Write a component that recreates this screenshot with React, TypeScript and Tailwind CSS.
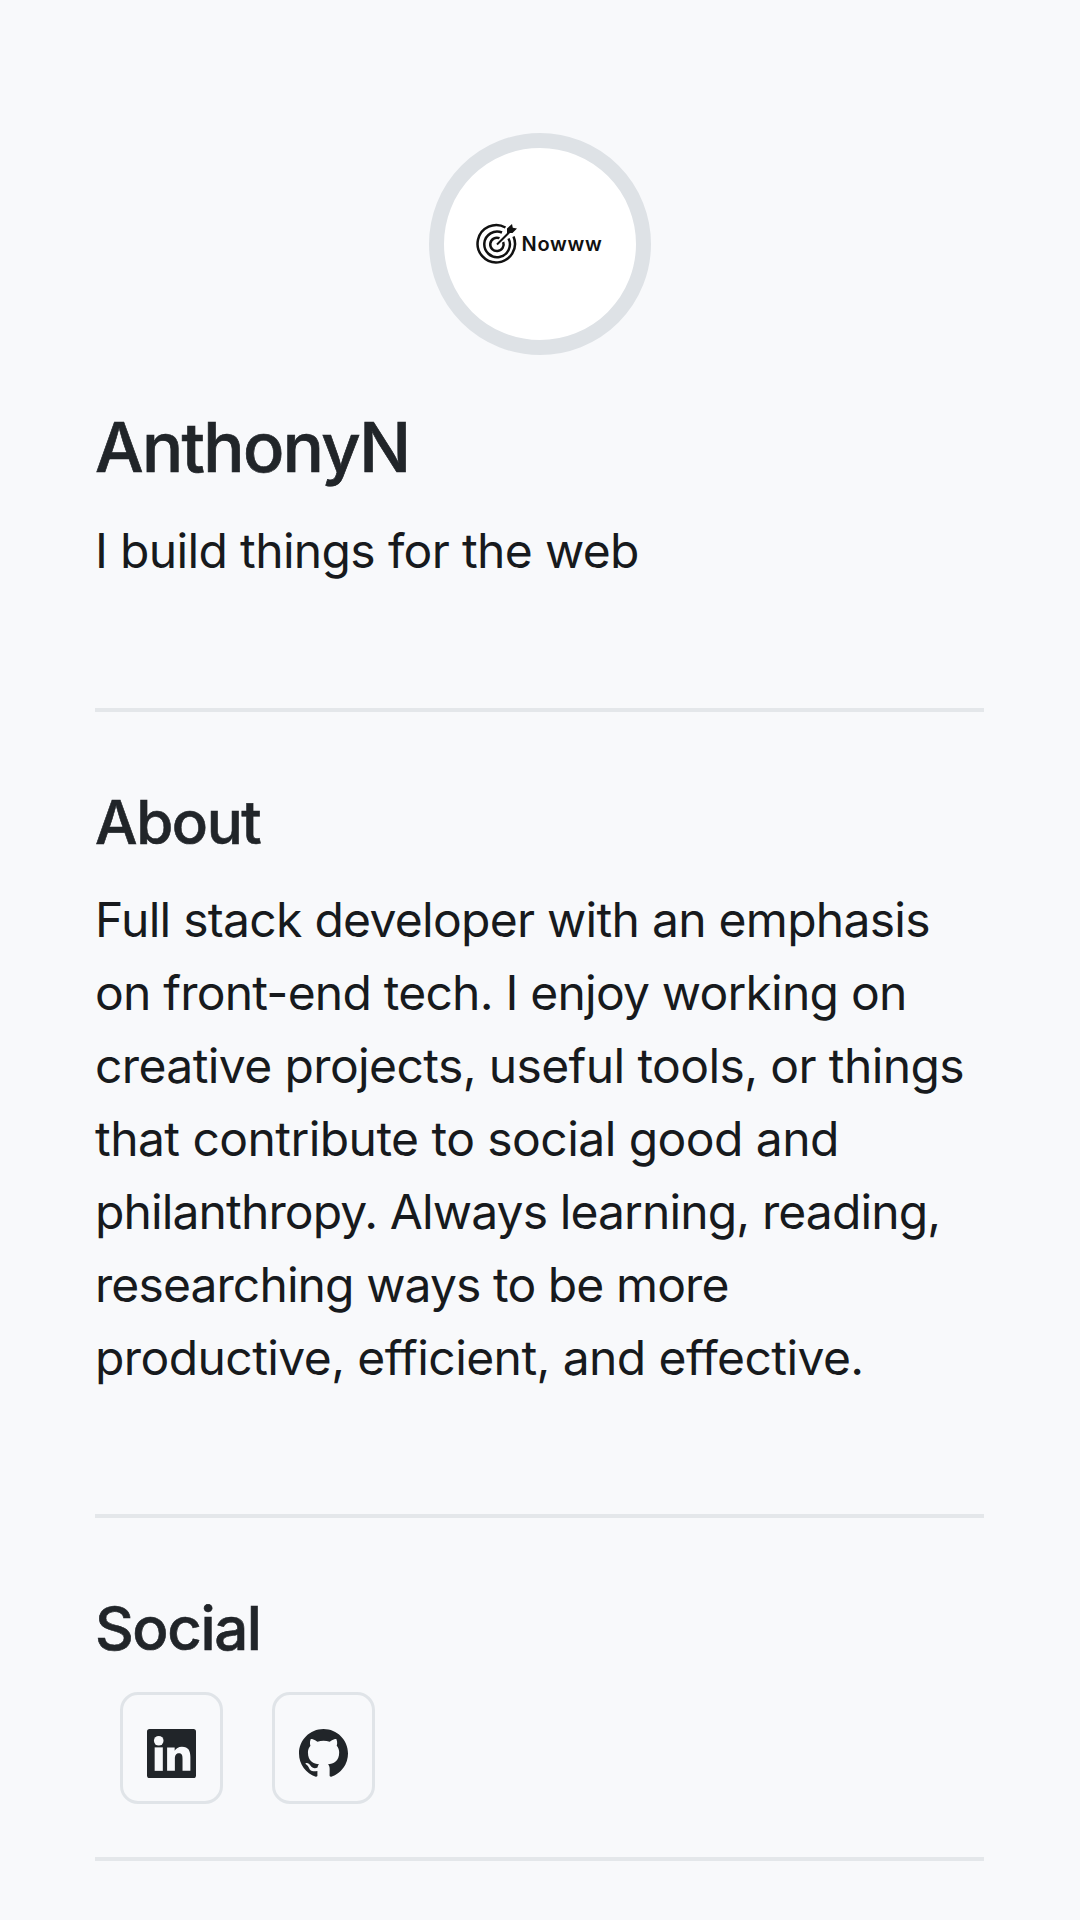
import React from 'react';
import { BsGithub } from 'react-icons/bs';

const aboutLines = [
  { text: 'Full stack developer with an emphasis', tracking: 'tracking-[-0.72px]' },
  { text: 'on front-end tech. I enjoy working on', tracking: 'tracking-[-0.78px]' },
  { text: 'creative projects, useful tools, or things', tracking: 'tracking-[-0.61px]' },
  { text: 'that contribute to social good and', tracking: 'tracking-[-0.56px]' },
  { text: 'philanthropy. Always learning, reading,', tracking: 'tracking-[-0.88px]' },
  { text: 'researching ways to be more', tracking: 'tracking-[-0.9px]' },
  { text: 'productive, efficient, and effective.', tracking: 'tracking-[-0.58px]' },
];

function TargetLogo() {
  return (
    <svg viewBox="0 0 42 42" className="h-[42px] w-[42px] shrink-0" fill="none" stroke="#111" strokeWidth="2.5">
      <path d="M29.500 4.500A18.700 18.700 0 1 0 37.500 13.500" />
      <path d="M26 9.500A12.800 12.800 0 1 0 32.500 15.500" />
      <path d="M23.500 15.200A6.700 6.700 0 1 0 27.200 19" />
      <path d="M21 21.500 34 8.500" strokeWidth="2" />
      <path d="M31 10V5.500L36 1l.8 3.800L41 5.500 36.500 10z" fill="#111" stroke="none" />
    </svg>
  );
}

function LinkedinIcon() {
  return (
    <svg viewBox="0 0 48 48" className="h-[49px] w-[49px]">
      <rect width="48" height="48" rx="2.500" fill="#212529" />
      <g fill="#f8f9fb">
        <circle cx="11.500" cy="11.500" r="4.700" />
        <path d="M7.500 18h8v23h-8z" />
        <path d="M19.700 18h7.400v3.200c1.200-2.200 3.700-3.900 7.100-3.900 6.500 0 8.300 4.100 8.300 10.200V41h-7.700V29.300c0-3-.3-5.600-3.500-5.600s-4 2.500-4 5.500V41h-7.600z" />
      </g>
    </svg>
  );
}

export default function App() {
  return (
    <main className="flex h-[1920px] w-[1080px] flex-col overflow-hidden bg-[#f8f9fb] px-24 font-['Inter',sans-serif] text-[#212529]">
      <div className="mx-auto mt-[133px] flex h-[222px] w-[222px] shrink-0 items-center justify-center rounded-full border-[15px] border-[#dee2e6] bg-white pr-[2px]">
        <TargetLogo />
        <span className="ml-[4px] text-[20px] leading-[24px] font-semibold tracking-[0.7px] text-[#111]">Nowww</span>
      </div>
      <h1 className="mt-[52px] -ml-px text-[68.5px] leading-[82px] font-medium tracking-[-1.6px] [-webkit-text-stroke:0.7px_#212529]">AnthonyN</h1>
      <p className="mt-[26px] -ml-px text-[48px] leading-[72px] tracking-[-0.65px] text-[#171a1d]">I build things for the web</p>
      <hr className="mt-[121px] -ml-px border-t-4 border-[#e4e7ea]" />
      <h2 className="mt-[74px] -ml-px text-[60px] leading-[72px] font-medium tracking-[-1.4px] [-webkit-text-stroke:0.6px_#212529]">About</h2>
      <div className="mt-[25px] -ml-px h-[508px] text-[48px] leading-[73px] whitespace-nowrap text-[#171a1d]">
        {aboutLines.map(({ text, tracking }) => <p key={text} className={tracking}>{text}</p>)}
      </div>
      <hr className="mt-[123px] -ml-px border-t-4 border-[#e4e7ea]" />
      <h2 className="mt-[74px] -ml-px text-[60px] leading-[72px] font-medium tracking-[-1.4px] [-webkit-text-stroke:0.6px_#212529]">Social</h2>
      <div className="mt-[28px] ml-6 flex gap-[49px]">
        <a className="flex h-[112px] w-[103px] items-center justify-center rounded-[18px] border-[3px] border-[#e0e4e8] pt-[10px]"><LinkedinIcon /></a>
        <a className="flex h-[112px] w-[103px] items-center justify-center rounded-[18px] border-[3px] border-[#e0e4e8] pt-[10px]"><BsGithub size={49} /></a>
      </div>
      <hr className="mt-[53px] -ml-px border-t-4 border-[#e4e7ea]" />
    </main>
  );
}
